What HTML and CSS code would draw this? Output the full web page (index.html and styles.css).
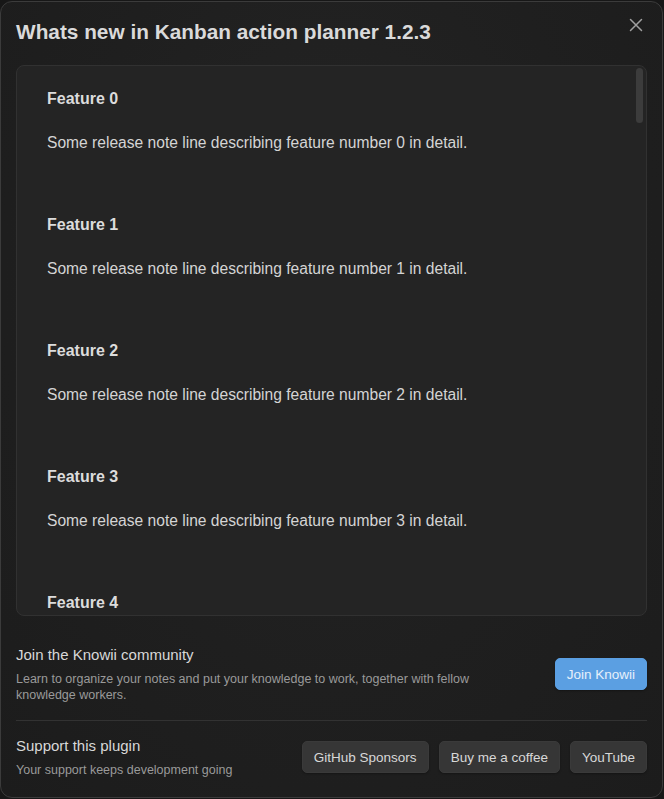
FILE: index.html
```html
<!DOCTYPE html>
<html>
<head>
<meta charset="utf-8">
<link rel="stylesheet" href="styles.css">
</head>
<body>
<div class="modal">
  <button class="close" aria-label="Close">
    <svg width="14" height="14" viewBox="0 0 14 14"><path d="M1.5 1.5 L12.5 12.5 M12.5 1.5 L1.5 12.5" stroke="#a0a0a0" stroke-width="1.5" stroke-linecap="round" fill="none"/></svg>
  </button>
  <h1 class="title">Whats new in Kanban action planner 1.2.3</h1>
  <div class="notes-wrap">
    <div class="notes" id="notes"></div>
    <div class="thumb"></div>
  </div>
  <div class="row first">
    <div class="info">
      <div class="row-title">Join the Knowii community</div>
      <div class="row-desc">Learn to organize your notes and put your knowledge to work, together with fellow knowledge workers.</div>
    </div>
    <div class="actions">
      <button class="btn primary">Join Knowii</button>
    </div>
  </div>
  <div class="row bordered">
    <div class="info">
      <div class="row-title">Support this plugin</div>
      <div class="row-desc">Your support keeps development going</div>
    </div>
    <div class="actions">
      <button class="btn">GitHub Sponsors</button>
      <button class="btn">Buy me a coffee</button>
      <button class="btn">YouTube</button>
    </div>
  </div>
</div>
<script>
  var n = document.getElementById('notes');
  var html = '';
  for (var i = 0; i < 40; i++) {
    html += '<div class="feature"><h3>Feature ' + i + '</h3><p>Some release note line describing feature number ' + i + ' in detail.</p></div>';
  }
  n.innerHTML = html;
</script>
</body>
</html>
```
FILE: styles.css
```css
html, body {
  margin: 0;
  padding: 0;
  background: #171717;
  height: 100%;
  overflow: hidden;
}
body {
  font-family: "Liberation Sans", Arial, sans-serif;
}
.modal {
  position: relative;
  box-sizing: border-box;
  width: 663px;
  height: 797px;
  margin-top: 1px;
  border: 1px solid #3b3b3b;
  border-radius: 12px;
  background: radial-gradient(ellipse at 50% 35%, #242424 0%, #1f1f1f 55%, #1c1c1c 100%);
  padding: 18px 15px 0 15px;
  display: flex;
  flex-direction: column;
}
.close {
  position: absolute;
  top: 15px;
  right: 18px;
  width: 16px;
  height: 16px;
  padding: 0;
  border: 0;
  background: none;
  display: flex;
  align-items: center;
  justify-content: center;
}
.title {
  margin: 0 0 21px 0;
  font-size: 20.8px;
  line-height: 24px;
  font-weight: bold;
  color: #dadada;
}
.notes-wrap {
  position: relative;
  flex: none;
  height: 551px;
}
.notes {
  height: 100%;
  box-sizing: border-box;
  border: 1px solid #313131;
  border-radius: 8px;
  background: #242424;
  overflow: hidden;
  padding: 0 30px;
}
.thumb {
  position: absolute;
  top: 3px;
  right: 4px;
  width: 7px;
  height: 55px;
  border-radius: 4px;
  background: #3c3c3c;
}
.feature {
  padding-top: 21px;
  padding-bottom: 37px;
}
.feature h3 {
  margin: 0;
  font-size: 16px;
  line-height: 24px;
  font-weight: bold;
  color: #dcdcdc;
}
.feature p {
  margin: 20px 0 0 0;
  font-size: 15.6px;
  line-height: 24px;
  color: #d4d4d4;
}
.row {
  display: flex;
  align-items: center;
  justify-content: space-between;
  gap: 20px;
  padding: 29px 0 17px 0;
}
.row.bordered {
  border-top: 1px solid #323232;
  padding-top: 15px;
  padding-bottom: 18px;
}
.info {
  flex: 1;
  min-width: 0;
}
.row-title {
  font-size: 15px;
  line-height: 20px;
  color: #d8d8d8;
  margin-bottom: 6px;
}
.row-desc {
  font-size: 12.5px;
  line-height: 16px;
  color: #9a9a9a;
  max-width: 470px;
}
.actions {
  display: flex;
  gap: 10px;
  flex: none;
}
.btn {
  font-family: "Liberation Sans", Arial, sans-serif;
  font-size: 13.5px;
  height: 32px;
  padding: 0 11px;
  border-radius: 5px;
  border: 1px solid #3a3a3a;
  background: #363636;
  color: #d8d8d8;
  box-shadow: 0 1px 2px rgba(0,0,0,0.3);
}
.btn.primary {
  background: #5b9fe2;
  border-color: #5b9fe2;
  color: #e6f0fb;
}
```
